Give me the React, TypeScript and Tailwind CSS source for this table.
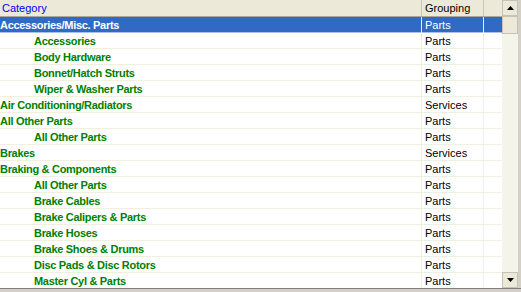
import React from "react";

type Row = { name: string; group: string; child?: boolean; selected?: boolean };

const rows: Row[] = [
  { name: "Accessories/Misc. Parts", group: "Parts", selected: true },
  { name: "Accessories", group: "Parts", child: true },
  { name: "Body Hardware", group: "Parts", child: true },
  { name: "Bonnet/Hatch Struts", group: "Parts", child: true },
  { name: "Wiper & Washer Parts", group: "Parts", child: true },
  { name: "Air Conditioning/Radiators", group: "Services" },
  { name: "All Other Parts", group: "Parts" },
  { name: "All Other Parts", group: "Parts", child: true },
  { name: "Brakes", group: "Services" },
  { name: "Braking & Components", group: "Parts" },
  { name: "All Other Parts", group: "Parts", child: true },
  { name: "Brake Cables", group: "Parts", child: true },
  { name: "Brake Calipers & Parts", group: "Parts", child: true },
  { name: "Brake Hoses", group: "Parts", child: true },
  { name: "Brake Shoes & Drums", group: "Parts", child: true },
  { name: "Disc Pads & Disc Rotors", group: "Parts", child: true },
  { name: "Master Cyl & Parts", group: "Parts", child: true },
];

function Arrow({ up }: { up?: boolean }) {
  return (
    <svg width="7" height="4" viewBox="0 0 7 4">
      <polygon points={up ? "3.5,0 7,4 0,4" : "0,0 7,0 3.5,4"} fill="#000" />
    </svg>
  );
}

export default function App() {
  return (
    <div className="flex h-[292px] w-[521px] flex-col bg-white font-['Liberation_Sans',sans-serif] text-[11px]">
      <div className="flex h-[288px]">
        <div className="flex w-[502px] flex-col">
          <div className="grid h-[17px] grid-cols-[422px_62px_18px] border-b border-[#aca899] bg-[#ece9d8]">
            <div className="border-r border-[#cbc7b8] pl-[2px] leading-[16px] text-[#0000ff]">Category</div>
            <div className="border-r border-[#cbc7b8] pl-[3px] leading-[16px] text-black">Grouping</div>
            <div />
          </div>
          {rows.map((r, i) => (
            <div
              key={i}
              className={`grid h-[16px] grid-cols-[422px_62px_18px] border-b ${
                r.selected ? "border-[#aac0e4] bg-[#316ac5] text-white" : "border-[#f1efe2] text-black"
              }`}
            >
              <div
                className={`border-r border-[#f1efe2] font-bold leading-[16px] tracking-[-0.3px] ${
                  r.child ? "pl-[34px]" : "pl-0"
                } ${r.selected ? "text-white" : "text-[#008000]"}`}
              >
                {r.name}
              </div>
              <div className="border-r border-[#f1efe2] pl-[3px] leading-[16px]">{r.group}</div>
              <div />
            </div>
          ))}
        </div>
        <div className="flex w-[16px] flex-col bg-[#f5f4ea]">
          <div className="flex h-[16px] items-center justify-center border border-[#c3c3b8] bg-[#ece9d8]">
            <Arrow up />
          </div>
          <div className="h-[18px] border border-[#c3c3b8] bg-[#ece9d8]" />
          <div className="flex-1" />
          <div className="flex h-[16px] items-center justify-center border border-[#c3c3b8] bg-[#ece9d8]">
            <Arrow />
          </div>
        </div>
        <div className="w-[3px] bg-[#d4d0c8]" />
      </div>
      <div className="h-[4px] border-t border-[#808080] bg-[#d4d0c8]" />
    </div>
  );
}
